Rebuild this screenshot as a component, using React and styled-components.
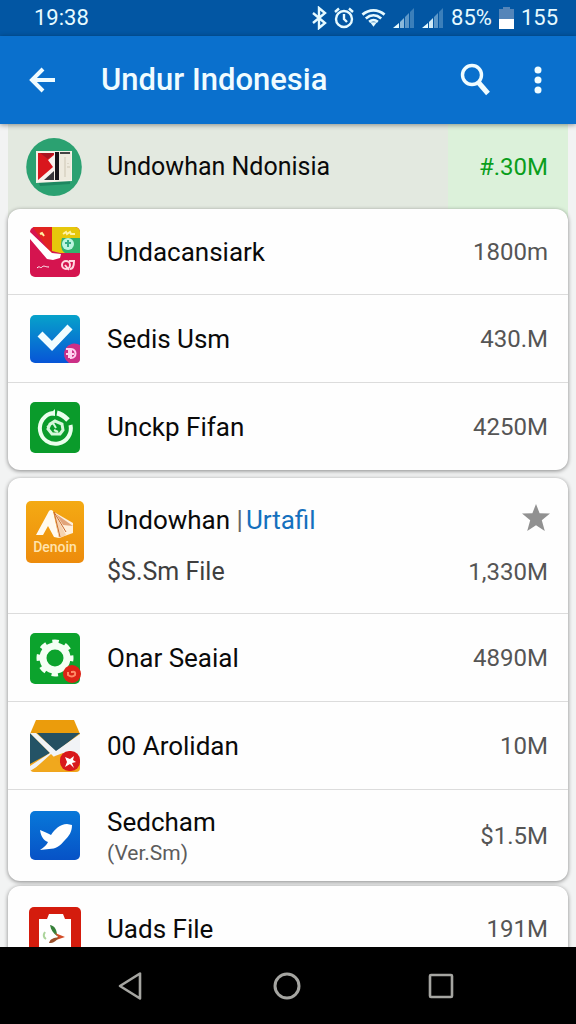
import React from "react"
import styled, { createGlobalStyle } from "styled-components"

const GlobalStyle = createGlobalStyle`
    * {
        box-sizing: border-box;
    }

    body {
        margin: 0;
        font-family: Roboto, "Liberation Sans", sans-serif;
        background: #000;
    }
`

const StyledScreen = styled.div`
    display: flex;
    flex-direction: column;
    height: 100vh;
    background: #f2f3f3;
`

const StyledStatusBar = styled.div`
    display: flex;
    align-items: center;
    flex: none;
    height: 36px;
    padding: 0 18px 0 34px;
    background: #0256a3;
    color: #e6faff;
    font-size: 22px;
    line-height: 34px;
`

const StyledStatusIcons = styled.div`
    display: flex;
    align-items: center;
    gap: 7px;
    margin-left: auto;
`

const StyledAppBar = styled.header`
    display: flex;
    align-items: center;
    flex: none;
    height: 88px;
    padding: 0 18px 0 22px;
    background: #0a70cd;
    box-shadow: 0 1px 5px rgba(0, 0, 0, .4);
    color: #f0fcff;
    z-index: 1;
`

const StyledTitle = styled.h1`
    flex: 1;
    margin: 0 0 0 39px;
    font-size: 31px;
    font-weight: 500;
    line-height: 40px;
    white-space: nowrap;
`

const StyledIconButton = styled.button`
    display: flex;
    align-items: center;
    justify-content: center;
    width: 40px;
    height: 48px;
    padding: 0;
    border: 0;
    background: none;
    color: inherit;
    cursor: pointer;
`

const StyledActions = styled.div`
    display: flex;
    gap: 23px;
`

const StyledMain = styled.main`
    flex: 1;
    min-height: 0;
    overflow: hidden;
    padding: 0 8px;
`

const StyledFeatured = styled.section`
    display: flex;
    align-items: stretch;
    height: 101px;
    margin-bottom: -16px;
    padding-left: 16px;
    background: #e3e9e0;
`

const StyledFeaturedBody = styled.div`
    display: flex;
    align-items: center;
    flex: 1;
    gap: 23px;
    padding-bottom: 16px;
`

const StyledFeaturedValue = styled.div`
    display: flex;
    align-items: center;
    justify-content: flex-end;
    width: 120px;
    padding: 0 20px 16px 0;
    background: #dcf1da;
    color: #0a9e1c;
    font-size: 24px;
    white-space: nowrap;
`

const StyledCard = styled.ul`
    position: relative;
    margin: 0 0 ${({ $gap }) => $gap || 8}px;
    padding: 0;
    list-style: none;
    background: #fefefe;
    border-radius: 12px;
    box-shadow: 0 1px 4px rgba(0, 0, 0, .45);
`

const StyledRow = styled.li`
    display: flex;
    align-items: ${({ $tall }) => ($tall ? "stretch" : "center")};
    gap: 22px;
    min-height: ${({ $height }) => $height || 88}px;
    padding: ${({ $tall }) => ($tall ? "22px 20px 0 17px" : "0 20px 0 17px")};

    & + & {
        border-top: 1px solid #dcdcdc;
    }
`

const StyledIconSlot = styled.div`
    display: flex;
    align-items: flex-start;
    justify-content: center;
    flex: none;
    width: 60px;

    svg {
        display: block;
    }
`

const StyledText = styled.div`
    display: flex;
    flex-direction: column;
    flex: 1;
    gap: ${({ $tall }) => ($tall ? 20 : 2)}px;
    padding-top: ${({ $tall }) => ($tall ? 4 : 0)}px;
    white-space: nowrap;
`

const StyledName = styled.span`
    color: #0a0a0a;
    font-size: ${({ $featured }) => ($featured ? 25 : 26)}px;
    line-height: 32px;
`

const StyledLink = styled.a`
    color: #1470bd;
    text-decoration: none;
`

const StyledBar = styled.span`
    margin-right: 3px;
    color: #666;
`

const StyledSub = styled.span`
    color: ${({ $small }) => ($small ? "#5c5c5c" : "#3f3f3f")};
    font-size: ${({ $small }) => ($small ? 21 : 25)}px;
    line-height: ${({ $small }) => ($small ? 26 : 32)}px;
`

const StyledValue = styled.span`
    color: #555;
    font-size: 24px;
    line-height: 32px;
    white-space: nowrap;
`

const StyledSide = styled.div`
    display: flex;
    flex-direction: column;
    align-items: flex-end;
    gap: 20px;
    padding-top: 4px;
`

const StyledStar = styled.button`
    display: flex;
    width: 28px;
    height: 32px;
    margin-right: -2px;
    padding: 0;
    border: 0;
    background: none;
    cursor: pointer;
`

const StyledNav = styled.nav`
    display: flex;
    align-items: center;
    justify-content: center;
    flex: none;
    gap: 114px;
    height: 77px;
    padding-right: 2px;
    background: #000;
    z-index: 1;
    color: #a5a5a1;
`

const Bluetooth = () => (
    <svg width="16" height="24" viewBox="0 0 16 24" fill="none" stroke="currentColor" strokeWidth="2.4">
        <path d="M2 7l12 10-6 5V2l6 5L2 17" />
    </svg>
)

const Alarm = () => (
    <svg width="20" height="22" viewBox="0 0 20 22" fill="none" stroke="currentColor" strokeWidth="2.4">
        <circle cx="10" cy="12" r="8" />
        <path d="M10 7v5l3 3M1 5l4-3.500M19 5l-4-3.500" />
    </svg>
)

const Wifi = () => (
    <svg width="25" height="20" viewBox="0 0 26 20" fill="none" stroke="currentColor" strokeWidth="2.8">
        <path d="M1.500 6.500c7-6 16-6 23 0M5 10.500c5-4.300 11-4.300 16 0M8.500 14c3-2.500 6-2.500 9 0" />
        <path d="M9.500 14.500h7L13 19z" fill="currentColor" stroke="none" />
    </svg>
)

const Signal = ({ level }) => (
    <svg width="22" height="22" viewBox="0 0 22 22" fill="currentColor">
        <path d="M0 21l6-5v5z" />
        <path d="M7 15l4-4v10H7z" opacity={level > 1 ? 0.9 : 0.6} />
        <path d="M12 10l4-4v15h-4z" opacity=".4" />
        <path d="M17 5l4-4v20h-4z" opacity=".25" />
    </svg>
)

const Battery = () => (
    <svg width="15" height="22" viewBox="0 0 15 22">
        <path d="M4 0h7v2h4v11H0V2h4z" fill="#5485b9" />
        <path d="M0 12h15v10H0z" fill="#fff" />
    </svg>
)

const Back = () => (
    <svg width="28" height="28" viewBox="0 0 28 28" fill="none" stroke="currentColor" strokeWidth="4">
        <path d="M15 3L4 14l11 11M4 14h23" />
    </svg>
)

const Search = () => (
    <svg width="32" height="34" viewBox="0 0 32 34" fill="none" stroke="currentColor">
        <circle cx="13" cy="12" r="9.500" strokeWidth="3.400" />
        <path d="M19.500 19.500l9.500 11" strokeWidth="5" />
    </svg>
)

const More = () => (
    <svg width="8" height="28" viewBox="0 0 8 28" fill="currentColor">
        <circle cx="4" cy="4" r="3.500" />
        <circle cx="4" cy="14" r="3.500" />
        <circle cx="4" cy="24" r="3.500" />
    </svg>
)

const Star = () => (
    <svg width="28" height="28" viewBox="0 0 28 28" fill="#919191">
        <path d="M14 0l3.600 9.200 10.400.3-8.200 6.700L22.800 27 14 21.200 5.200 27l3-10.800L0 9.500l10.400-.3z" />
    </svg>
)

const FlagIcon = () => (
    <svg width="56" height="58" viewBox="0 0 56 58">
        <ellipse cx="28" cy="29" rx="27.800" ry="29" fill="#2ba171" />
        <path d="M12 43h32v3l-30 2z" fill="#1d8760" />
        <path d="M10 13h36v30L10 45z" fill="#f5f2e8" />
        <path d="M12 15h17l-1 28H12z" fill="#f7f3ef" />
        <path d="M12 15h16v2l-6 5 5 7-15 13z" fill="#d9161d" />
        <path d="M14 15h14l-6 6z" fill="#a81420" />
        <path d="M18 42l10-9v9z" fill="#37363a" />
        <path d="M29 14h4v28h-4z" fill="#17161a" />
        <path d="M33 14h12v28H33z" fill="#eeeade" />
        <path d="M34 15h10" stroke="#444" strokeWidth="2" />
        <path d="M39 19v20M42 25v1M41 29h3" stroke="#cdc6b4" />
    </svg>
)

const CollageIcon = () => (
    <svg width="52" height="52" viewBox="0 0 52 52">
        <clipPath id="collage"><rect x="1" y="1" width="50" height="50" rx="5" /></clipPath>
        <g clipPath="url(#collage)">
            <path d="M0 0h52v52H0z" fill="#d5144f" />
            <path d="M3 0h20v29z" fill="#e12420" />
            <path d="M23 0h29v27H31l-8-2z" fill="#e6c70b" />
            <path d="M33 12h19v15H36q-6-4-3-15z" fill="#33b06c" />
            <circle cx="39" cy="18" r="6" fill="#bdf4df" />
            <path d="M36 17h6M39 14v7" stroke="#36ae86" strokeWidth="2" />
            <path d="M1 6l22 21 9 1-1 4-7 2-6-1L1 13z" fill="#fff" />
            <path d="M34 8l3-2 1 2 3-2 1 2h4M11 8l2-1 2 3" fill="none" stroke="#fff2a3" strokeWidth="2" />
            <path d="M8 42c3-3 3 1 5-1s3 0 7 0" fill="none" stroke="#fff" />
            <circle cx="37" cy="39" r="4" fill="none" stroke="#ffd6e0" strokeWidth="2" />
            <path d="M36 39l4 5M40 35h5c0 5-1 8-4 8" fill="none" stroke="#ffd6e0" strokeWidth="2" />
        </g>
    </svg>
)

const CheckIcon = () => (
    <svg width="52" height="52" viewBox="0 0 52 52">
        <defs>
            <linearGradient id="check" x2="0" y2="1">
                <stop stopColor="#07a2ca" />
                <stop offset="1" stopColor="#0755d7" />
            </linearGradient>
        </defs>
        <rect x="1" y="2" width="50" height="48" rx="5" fill="url(#check)" />
        <path d="M11 21l12 12 18-19" fill="none" stroke="#f1fdff" strokeWidth="7" />
        <path d="M51 32v14q0 4-4 4h-7a10 10 0 0 1 11-18z" fill="#cc2f86" />
        <path d="M37 36h3v9M37 41h4M42 36c6 0 6 9 0 9zM42 41h3" fill="none" stroke="#ffd1ee" strokeWidth="2" />
    </svg>
)

const SyncIcon = () => (
    <svg width="52" height="52" viewBox="0 0 52 52">
        <rect x="1" y="1" width="50" height="51" rx="5" fill="#0a9b2b" />
        <path d="M24 12A15.500 15.500 0 1 0 41.500 24" fill="none" stroke="#eaffed" strokeWidth="4" />
        <path d="M28 12c5 1 8 4 11 7" fill="none" stroke="#eaffed" strokeWidth="5" />
        <path d="M20 14l6-6v7z" fill="#eaffed" />
        <path d="M21 23l5-3 7 3 1 6-3 4h-8l-4-5z" fill="none" stroke="#d5f7da" strokeWidth="3" />
        <path d="M18 26l6-4 3 5M25 29l4 2" fill="none" stroke="#d5f7da" strokeWidth="2" />
    </svg>
)

const DenoinIcon = () => (
    <svg width="60" height="64" viewBox="0 0 60 64">
        <defs>
            <linearGradient id="denoin" x2="0" y2="1">
                <stop stopColor="#f4aa13" />
                <stop offset="1" stopColor="#ed8b0c" />
            </linearGradient>
        </defs>
        <rect x="1" y="1" width="58" height="62" rx="5" fill="url(#denoin)" />
        <path d="M11 35L24 11q2-2 4 0l6 27-5-1-6-11-5 9z" fill="#fffaf0" />
        <path d="M29 12l19 11v10l-14 5z" fill="#fff0dc" />
        <path d="M29 12l12 23-6 3z" fill="#f5d3b0" />
        <path d="M29 12l6 25M29 12l12 20" stroke="#c96a2c" />
        <path d="M31 14l17 12-10-1z" fill="#e2a57a" />
        <text x="30" y="52" textAnchor="middle" fontFamily="Roboto, sans-serif" fontSize="14" fontWeight="500" fill="#ffe3ac">Denoin</text>
    </svg>
)

const GearIcon = () => (
    <svg width="52" height="52" viewBox="0 0 52 52">
        <rect x="1" y="1" width="50" height="51" rx="5" fill="#0ca32d" />
        <circle cx="26" cy="26" r="12" fill="none" stroke="#f4fff4" strokeWidth="7" />
        <circle cx="26" cy="26" r="16.500" fill="none" stroke="#f4fff4" strokeWidth="4" strokeDasharray="6.500 6.460" strokeDashoffset="3.200" />
        <circle cx="43" cy="42" r="9" fill="#dc2316" />
        <path d="M39 40v3q4 3 7 0 1-4-3-3h-1" fill="none" stroke="#ff8b68" strokeWidth="2" />
    </svg>
)

const EnvelopeIcon = () => (
    <svg width="52" height="54" viewBox="0 0 52 54">
        <path d="M1 14h50v35q0 4-4 4H5q-4 0-4-4z" fill="#f1a51c" />
        <path d="M7 1h38l6 14H1z" fill="#eb9c0c" />
        <path d="M1 14l20 20L1 45z" fill="#245366" />
        <path d="M8 14h43L27 33z" fill="#255062" />
        <path d="M1 14h6l20 18L51 15v26L34 34l-8 3L1 52v-5l20-13z" fill="#f1f3f6" />
        <path d="M22 35l17 17H3z" fill="#f0a81d" />
        <rect x="31" y="32" width="20" height="20" rx="9" fill="#d8181c" />
        <path d="M36 38l5 2 4-3-1 4 3 2-4 1 2 5-4-4-5 3 2-5z" fill="#fff" />
    </svg>
)

const BirdIcon = () => (
    <svg width="52" height="52" viewBox="0 0 52 52">
        <defs>
            <linearGradient id="bird" x2="0" y2="1">
                <stop stopColor="#0878d9" />
                <stop offset="1" stopColor="#0752c6" />
            </linearGradient>
        </defs>
        <rect x="1" y="1" width="50" height="49" rx="5" fill="url(#bird)" />
        <path d="M11 20c4 2 8 3 11 5 4-6 9-11 16-11l5 1c0 7-3 11-7 15-5 6-9 9-16 9l-9 1c4-3 7-5 8-8-5-2-7-6-8-12z" fill="#fff" />
    </svg>
)

const ClipboardIcon = () => (
    <svg width="54" height="52" viewBox="0 -3 54 52">
        <rect x="1" y="1" width="52" height="56" rx="5" fill="#d41c0d" />
        <path d="M11 13h8l2-5h14l2 5h6v39H11z" fill="#fff" />
        <path d="M22 19c5 1 7 5 7 11-4-3-6-6-7-11z" fill="#37803a" />
        <path d="M27 27l10 4-9 3 2-3z" fill="#d34b26" />
        <path d="M21 37c1-4 4-5 10-6-3 4-5 6-10 6z" fill="#9a502b" />
        <path d="M17 26c-2 3-2 5 1 7" fill="none" stroke="#acd49c" strokeWidth="2" />
    </svg>
)

const Row = ({ icon, name, sub, value, height }) => (
    <StyledRow $height={height}>
        <StyledIconSlot>{icon}</StyledIconSlot>
        <StyledText>
            <StyledName>{name}</StyledName>
            {sub && <StyledSub $small>{sub}</StyledSub>}
        </StyledText>
        <StyledValue>{value}</StyledValue>
    </StyledRow>
)

const App = () => (
    <StyledScreen>
        <GlobalStyle />
        <StyledStatusBar>
            <span>19:38</span>
            <StyledStatusIcons>
                <Bluetooth />
                <Alarm />
                <Wifi />
                <Signal level={1} />
                <Signal level={2} />
                <span>85%</span>
                <Battery />
                <span>155</span>
            </StyledStatusIcons>
        </StyledStatusBar>
        <StyledAppBar>
            <StyledIconButton aria-label="Back"><Back /></StyledIconButton>
            <StyledTitle>Undur Indonesia</StyledTitle>
            <StyledActions>
                <StyledIconButton aria-label="Search"><Search /></StyledIconButton>
                <StyledIconButton aria-label="More options"><More /></StyledIconButton>
            </StyledActions>
        </StyledAppBar>
        <StyledMain>
            <StyledFeatured>
                <StyledFeaturedBody>
                    <StyledIconSlot><FlagIcon /></StyledIconSlot>
                    <StyledName $featured>Undowhan Ndonisia</StyledName>
                </StyledFeaturedBody>
                <StyledFeaturedValue>#.30M</StyledFeaturedValue>
            </StyledFeatured>
            <StyledCard>
                <Row icon={<CollageIcon />} name="Undacansiark" value="1800m" height={85} />
                <Row icon={<CheckIcon />} name="Sedis Usm" value="430.M" />
                <Row icon={<SyncIcon />} name="Unckp Fifan" value="4250M" />
            </StyledCard>
            <StyledCard $gap={5}>
                <StyledRow $tall $height={135}>
                    <StyledIconSlot><DenoinIcon /></StyledIconSlot>
                    <StyledText $tall>
                        <StyledName>
                            Undowhan <StyledBar>|</StyledBar><StyledLink href="#urtafil">Urtafil</StyledLink>
                        </StyledName>
                        <StyledSub>$S.Sm File</StyledSub>
                    </StyledText>
                    <StyledSide>
                        <StyledStar aria-label="Favourite"><Star /></StyledStar>
                        <StyledValue>1,330M</StyledValue>
                    </StyledSide>
                </StyledRow>
                <Row icon={<GearIcon />} name="Onar Seaial" value="4890M" />
                <Row icon={<EnvelopeIcon />} name="00 Arolidan" value="10M" />
                <Row icon={<BirdIcon />} name="Sedcham" sub="(Ver.Sm)" value="$1.5M" height={92} />
            </StyledCard>
            <StyledCard>
                <Row icon={<ClipboardIcon />} name="Uads File" value="191M" height={85} />
            </StyledCard>
        </StyledMain>
        <StyledNav>
            <StyledIconButton aria-label="Back">
                <svg width="30" height="30" viewBox="0 0 30 30" fill="none" stroke="currentColor" strokeWidth="2.600" strokeLinejoin="round">
                    <path d="M2 15L22 2.500v25z" />
                </svg>
            </StyledIconButton>
            <StyledIconButton aria-label="Home">
                <svg width="28" height="28" viewBox="0 0 28 28" fill="none" stroke="currentColor" strokeWidth="3">
                    <circle cx="14" cy="14" r="12" />
                </svg>
            </StyledIconButton>
            <StyledIconButton aria-label="Recent apps">
                <svg width="26" height="26" viewBox="0 0 26 26" fill="none" stroke="currentColor" strokeWidth="2.600">
                    <rect x="2" y="2" width="22" height="22" rx="1" />
                </svg>
            </StyledIconButton>
        </StyledNav>
    </StyledScreen>
)

export default App
